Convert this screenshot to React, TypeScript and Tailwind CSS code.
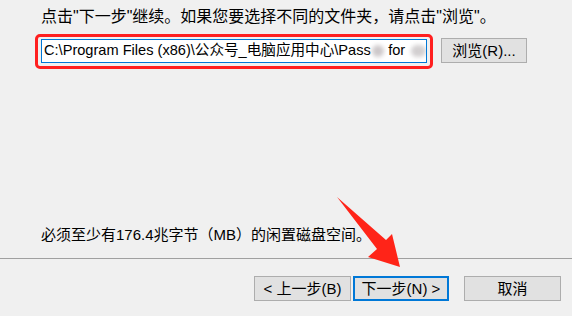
import React from "react";

const F = { fontFamily: '"Liberation Sans", "Noto Sans CJK SC", sans-serif' };

function Btn({ children, w, primary }: { children: React.ReactNode; w: string; primary?: boolean }) {
  return (
    <div
      className={`${w} h-[25px] flex items-center justify-center bg-[#e1e1e1] text-[15px] text-black leading-none ${
        primary ? "border-2 border-[#0078d7]" : "border border-[#adadad]"
      }`}
    >
      {children}
    </div>
  );
}

export default function App() {
  return (
    <div className="relative w-[572px] h-[316px] bg-[#f0f0f0] overflow-hidden text-black" style={F}>
      <div className="h-[258px] flex flex-col pl-[35px] pt-[7px]">
        <div className="pl-[6px] text-[16px] leading-[20px] whitespace-nowrap">
          点击"下一步"继续。如果您要选择不同的文件夹，请点击"浏览"。
        </div>
        <div className="flex items-start mt-[7px]">
          <div className="w-[398px] h-[35px] border-[3px] border-[#ff1f1f] rounded-[5px] pt-[2px] px-[3px]">
            <div className="h-[24px] border border-[#0078d7] bg-white flex items-center pl-[2px] text-[14.6px] whitespace-nowrap overflow-hidden">
              <span>C:\Program Files (x86)\公众号_电脑应用中心\Pass</span>
              <span className="inline-block w-[20px] h-[12px] rounded-full bg-[#cdc8ca] blur-[2px] ml-[1px]" />
              <span className="ml-[4px]">for</span>
              <span className="inline-block w-[24px] h-[12px] rounded-full bg-[#d2cfd0] blur-[2px] ml-[6px]" />
            </div>
          </div>
          <div className="ml-[8px] mt-[4px] w-[86px] h-[25px] bg-[#e1e1e1] border border-[#adadad] flex items-center justify-center text-[15px] leading-none">
            浏览(R)...
          </div>
        </div>
        <div className="flex-1" />
        <div className="pl-[6px] text-[15px] leading-[20px] whitespace-nowrap mb-[13px]">
          必须至少有176.4兆字节（MB）的闲置磁盘空间。
        </div>
      </div>
      <div className="h-px bg-[#a0a0a0]" />
      <div className="flex justify-end pr-[11px] pt-[17px]">
        <Btn w="w-[97px]">&lt; 上一步(B)</Btn>
        <div className="w-[2px]" />
        <Btn w="w-[96px]" primary>
          下一步(N) &gt;
        </Btn>
        <div className="w-[15px]" />
        <Btn w="w-[97px]">取消</Btn>
      </div>
      <svg className="absolute left-0 top-0 pointer-events-none" width="572" height="316">
        <polygon
          points="337,197 386,240 392,234 400,267 368,257 377,249"
          fill="#ff2418"
        />
      </svg>
    </div>
  );
}
